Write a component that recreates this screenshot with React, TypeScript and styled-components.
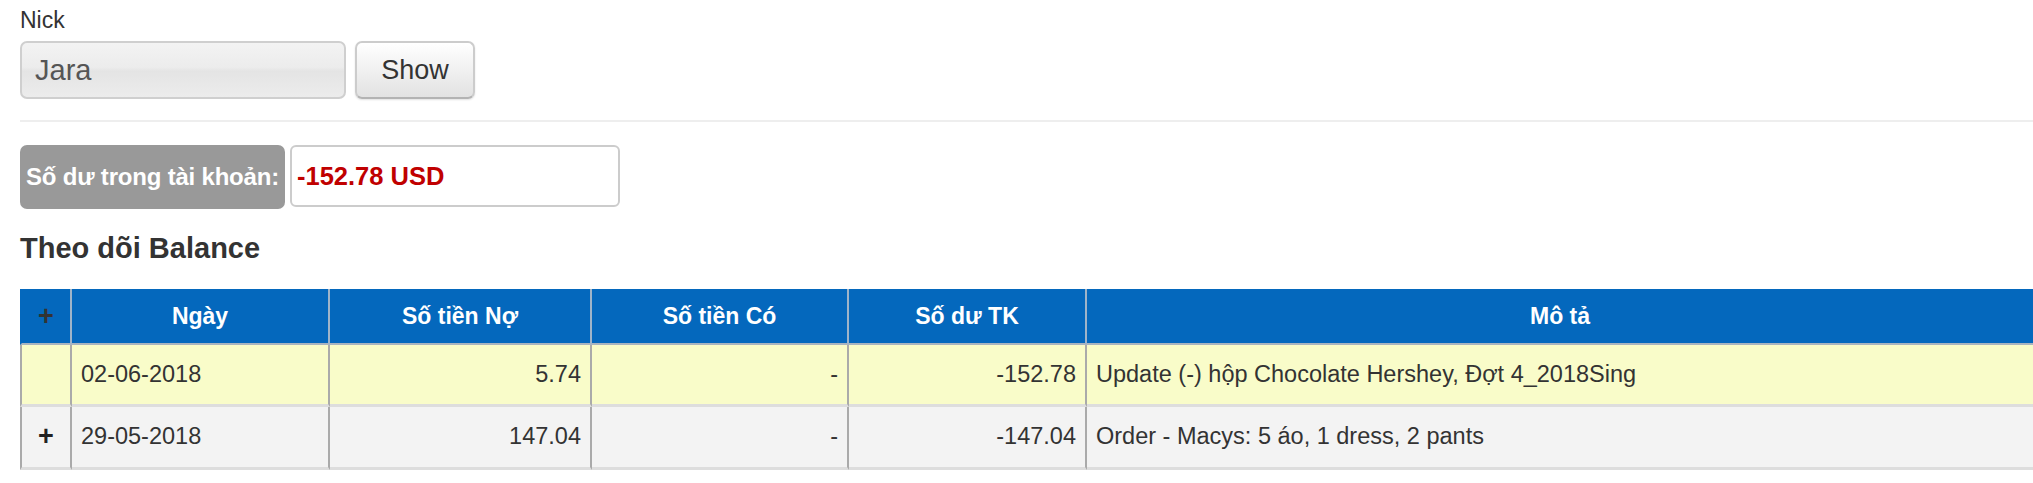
import React from 'react';
import styled, { createGlobalStyle } from 'styled-components';

const GlobalStyle = createGlobalStyle`
  body {
    margin: 0;
    background: #fff;
    color: #333;
    font-family: "Liberation Sans", Arial, Helvetica, sans-serif;
  }
`;

const Page = styled.div`
  padding: 4px 0 0 20px;
`;

const FieldLabel = styled.label`
  display: block;
  font-size: 23px;
  line-height: 33px;
  margin-bottom: 4px;
  color: #333;
`;

const SearchRow = styled.div`
  display: flex;
  gap: 9px;
  height: 58px;
`;

const NickInput = styled.input`
  box-sizing: border-box;
  width: 326px;
  height: 58px;
  padding: 0 13px;
  border: 2px solid #cfcfcf;
  border-radius: 7px;
  background: linear-gradient(#f3f3f3 0%, #ececec 45%, #e4e4e4 52%, #ececec 100%);
  font-family: inherit;
  font-size: 29px;
  color: #555;
  outline: none;
`;

const ShowButton = styled.button`
  box-sizing: border-box;
  width: 120px;
  height: 58px;
  border: 2px solid #cccccc;
  border-bottom-color: #b3b3b3;
  border-radius: 7px;
  background: linear-gradient(#ffffff, #e2e2e2);
  box-shadow: 0 1px 2px rgba(0, 0, 0, 0.12);
  font-family: inherit;
  font-size: 27px;
  color: #333;
  cursor: pointer;
`;

const Divider = styled.hr`
  margin: 21px 0 23px;
  height: 2px;
  border: 0;
  background: #eeeeee;
`;

const BalanceRow = styled.div`
  display: flex;
  align-items: flex-start;
  gap: 5px;
`;

const BalanceLabel = styled.div`
  box-sizing: border-box;
  width: 265px;
  height: 64px;
  display: flex;
  align-items: center;
  justify-content: center;
  border-radius: 7px;
  background: #999999;
  color: #fff;
  font-size: 24px;
  font-weight: bold;
  white-space: nowrap;
  letter-spacing: -0.2px;
`;

const BalanceValue = styled.div`
  box-sizing: border-box;
  width: 330px;
  height: 62px;
  display: flex;
  align-items: center;
  padding-left: 5px;
  border: 2px solid #cccccc;
  border-radius: 6px;
  color: #c00000;
  font-size: 25.5px;
  font-weight: bold;
`;

const Heading = styled.h4`
  margin: 24px 0 24px;
  font-size: 29px;
  line-height: 1.1;
  font-weight: bold;
  color: #333;
`;

const Table = styled.table`
  width: 100%;
  table-layout: fixed;
  border-collapse: separate;
  border-spacing: 0;
`;

const HeadCell = styled.th<{ $w?: number; $first?: boolean }>`
  box-sizing: border-box;
  width: ${(p) => (p.$w ? `${p.$w}px` : 'auto')};
  padding: 10px 9px;
  line-height: 34px;
  background: #0468bd;
  color: ${(p) => (p.$first ? '#333' : '#fff')};
  font-size: ${(p) => (p.$first ? '27px' : '23px')};
  font-weight: bold;
  text-align: center;
  border-right: 2px solid #9fb4c9;
  border-bottom: 2px solid #aab4bf;
  border-left: ${(p) => (p.$first ? '2px solid #0468bd' : '0')};
  &:last-child {
    border-right: 0;
  }
`;

const BodyRow = styled.tr<{ $tone: 'yellow' | 'gray' }>`
  background: ${(p) => (p.$tone === 'yellow' ? '#f9fcc9' : '#f3f3f3')};
`;

const Cell = styled.td<{ $align?: 'left' | 'right' | 'center'; $first?: boolean }>`
  box-sizing: border-box;
  padding: 13px 9px 13px;
  line-height: 33px;
  font-size: 23.5px;
  color: #333;
  text-align: ${(p) => p.$align ?? 'left'};
  white-space: nowrap;
  overflow: hidden;
  border-right: 2px solid #aaaaaa;
  border-bottom: 3px solid #dddddd;
  border-left: ${(p) => (p.$first ? '2px solid #aaaaaa' : '0')};
  &:last-child {
    border-right: 0;
  }
`;

const Expander = styled.span`
  font-size: 27px;
  font-weight: bold;
  color: #222;
`;

type Entry = {
  date: string;
  debit: string;
  credit: string;
  balance: string;
  note: string;
  expandable: boolean;
  tone: 'yellow' | 'gray';
};

const entries: Entry[] = [
  {
    date: '02-06-2018',
    debit: '5.74',
    credit: '-',
    balance: '-152.78',
    note: 'Update (-) hộp Chocolate Hershey, Đợt 4_2018Sing',
    expandable: false,
    tone: 'yellow',
  },
  {
    date: '29-05-2018',
    debit: '147.04',
    credit: '-',
    balance: '-147.04',
    note: 'Order - Macys: 5 áo, 1 dress, 2 pants',
    expandable: true,
    tone: 'gray',
  },
];

export default function App() {
  return (
    <>
      <GlobalStyle />
      <Page>
        <FieldLabel htmlFor="nick">Nick</FieldLabel>
        <SearchRow>
          <NickInput id="nick" defaultValue="Jara" readOnly />
          <ShowButton type="button">Show</ShowButton>
        </SearchRow>

        <Divider />

        <BalanceRow>
          <BalanceLabel>Số dư trong tài khoản:</BalanceLabel>
          <BalanceValue>-152.78 USD</BalanceValue>
        </BalanceRow>

        <Heading>Theo dõi Balance</Heading>

        <Table>
          <thead>
            <tr>
              <HeadCell $w={52} $first>+</HeadCell>
              <HeadCell $w={258}>Ngày</HeadCell>
              <HeadCell $w={262}>Số tiền Nợ</HeadCell>
              <HeadCell $w={257}>Số tiền Có</HeadCell>
              <HeadCell $w={238}>Số dư TK</HeadCell>
              <HeadCell>Mô tả</HeadCell>
            </tr>
          </thead>
          <tbody>
            {entries.map((e) => (
              <BodyRow key={e.date} $tone={e.tone}>
                <Cell $first $align="center">
                  {e.expandable && <Expander>+</Expander>}
                </Cell>
                <Cell>{e.date}</Cell>
                <Cell $align="right">{e.debit}</Cell>
                <Cell $align="right">{e.credit}</Cell>
                <Cell $align="right">{e.balance}</Cell>
                <Cell>{e.note}</Cell>
              </BodyRow>
            ))}
          </tbody>
        </Table>
      </Page>
    </>
  );
}
